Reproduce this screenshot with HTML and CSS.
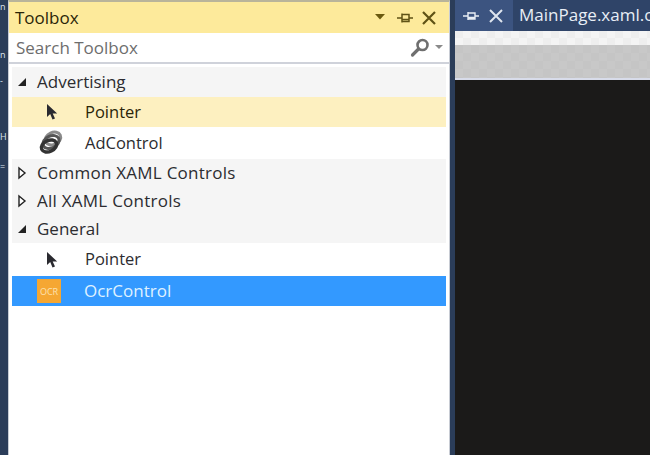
FILE: index.html
```html
<!DOCTYPE html>
<html lang="en">
<head>
<meta charset="utf-8">
<title>Toolbox</title>
<link rel="stylesheet" href="styles.css">
</head>
<body>
<div class="app">
  <div class="rail">
    <span class="r1">n</span><span class="r2">n</span><span class="r3">-</span><span class="r4">H</span><span class="r5">=</span>
  </div>
  <section class="toolbox">
    <header class="titlebar">
      <span class="title">Toolbox</span>
      <svg class="title-icons" width="66" height="16" viewBox="0 0 66 16">
        <path d="M1 4h10L6 9.500z" fill="#6b5a10"/>
        <path d="M23 8h5M28 3.500v9M28 4.500h7v7h-7M28 9.500h7M35 8h4" fill="none" stroke="#5f5215" stroke-width="1.500"/>
        <path d="M49 2l12 12M61 2L49 14" fill="none" stroke="#5f5215" stroke-width="2.200"/>
      </svg>
    </header>
    <div class="search">
      <span class="placeholder">Search Toolbox</span>
      <svg class="search-icon" width="38" height="20" viewBox="0 0 38 20">
        <circle cx="13.500" cy="7" r="5" fill="none" stroke="#6f6f6f" stroke-width="2.600"/>
        <path d="M9.500 11L3.500 17" stroke="#6f6f6f" stroke-width="3.200" stroke-linecap="round"/>
        <path d="M26 7h8l-4 4z" fill="#8a8a8a"/>
      </svg>
    </div>
    <div class="list">
      <div class="group g1"><svg class="tri" width="12" height="12" viewBox="0 0 12 12"><path d="M10 2v8H2z" fill="#222"/></svg><span class="label">Advertising</span></div>
      <div class="item hover h30">
        <svg class="ico" width="14" height="20" viewBox="0 0 14 20"><path d="M2 2v13l3.200-3 2.300 5.500 2.500-1-2.300-5h4.500z" fill="#2a2a30"/></svg>
        <span class="label narrow">Pointer</span>
      </div>
      <div class="item h32">
        <svg class="ico ad" width="26" height="26" viewBox="0 0 26 26">
          <ellipse cx="15" cy="8.500" rx="8" ry="6" transform="rotate(-25 15 8.500)" fill="none" stroke="#8a8a8a" stroke-width="3"/>
          <ellipse cx="13" cy="12" rx="8.500" ry="6" transform="rotate(-25 13 12)" fill="none" stroke="#555" stroke-width="3"/>
          <ellipse cx="11" cy="16" rx="8" ry="5.500" transform="rotate(-25 11 16)" fill="none" stroke="#333" stroke-width="3.500"/>
        </svg>
        <span class="label ad-label">AdControl</span>
      </div>
      <div class="group"><svg class="tri" width="12" height="14" viewBox="0 0 12 14"><path d="M3 2l6 5-6 5z" fill="#fff" stroke="#222" stroke-width="1.400"/></svg><span class="label wide">Common XAML Controls</span></div>
      <div class="group"><svg class="tri" width="12" height="14" viewBox="0 0 12 14"><path d="M3 2l6 5-6 5z" fill="#fff" stroke="#222" stroke-width="1.400"/></svg><span class="label wide">All XAML Controls</span></div>
      <div class="group"><svg class="tri" width="12" height="12" viewBox="0 0 12 12"><path d="M10 2v8H2z" fill="#222"/></svg><span class="label">General</span></div>
      <div class="item h33">
        <svg class="ico" width="14" height="20" viewBox="0 0 14 20"><path d="M2 2v13l3.200-3 2.300 5.500 2.500-1-2.300-5h4.500z" fill="#2a2a30"/></svg>
        <span class="label narrow">Pointer</span>
      </div>
      <div class="item selected h30">
        <span class="ocr">OCR</span>
        <span class="label">OcrControl</span>
      </div>
    </div>
  </section>
  <section class="doc">
    <div class="tabs">
      <div class="tab-tools">
        <svg width="52" height="18" viewBox="0 0 52 18">
          <path d="M3 9h5M8 5v8M8 6h7v6H8M8 10.500h7M15 9h4" fill="none" stroke="#e8edf4" stroke-width="1.400"/>
          <path d="M30 3l12 12M42 3L30 15" fill="none" stroke="#dfe5ee" stroke-width="2"/>
        </svg>
      </div>
      <div class="tab">MainPage.xaml.cs</div>
    </div>
    <div class="ruler"></div>
    <div class="band"></div>
    <div class="canvas"></div>
  </section>
</div>
</body>
</html>
```
FILE: styles.css
```css
* { box-sizing: border-box; }
html, body { margin: 0; padding: 0; }
body {
  width: 650px;
  height: 455px;
  overflow: hidden;
  font-family: "Open Sans", "Noto Sans", sans-serif;
  font-size: 17px;
  color: #2c2c30;
}
.app { display: flex; width: 650px; height: 455px; background: #2b3d59; }
.rail {
  width: 8px;
  flex: none;
  overflow: hidden;
  display: flex;
  flex-direction: column;
  align-items: flex-start;
  color: #dfe6ef;
  font-size: 9px;
  line-height: 10px;
}
.r1 { margin-top: 2px; }
.r2 { margin-top: 38px; }
.r3 { margin-top: 16px; }
.r4 { margin-top: 46px; }
.r5 { margin-top: 20px; }
.toolbox {
  width: 442px;
  flex: none;
  display: flex;
  flex-direction: column;
  background: #fff;
  border-top: 2px solid #b9b49a;
  border-left: 1px solid #c8ccd4;
  border-right: 1px solid #c8ccd4;
}
.titlebar {
  height: 31px;
  flex: none;
  display: flex;
  align-items: center;
  justify-content: space-between;
  padding: 0 9px 0 6px;
  background: #fdea9b;
}
.title { color: #2a2508; font-size: 17px; }
.search {
  height: 31px;
  flex: none;
  display: flex;
  align-items: center;
  justify-content: space-between;
  padding: 0 2px 0 7px;
  border-bottom: 2px solid #cfd2da;
}
.placeholder { color: #6d6d6d; font-size: 17px; }
.list { flex: 1; padding: 3px 3px 0 3px; }
.group {
  display: flex;
  align-items: center;
  height: 28px;
  background: #f5f5f5;
}
.g1 { height: 30px; }
.label { margin-bottom: 2px; }
.tri { width: 12px; margin-left: 4px; margin-right: 9px; flex: none; }
.wide { letter-spacing: 0.25px; }
.narrow { font-size: 16.500px; }
.ad-label { font-size: 16.500px; }
.item { display: flex; align-items: center; padding-left: 33px; }
.h30 { height: 30px; }
.h32 { height: 32px; }
.h33 { height: 33px; }
.hover { background: #fdf0c0; color: #2a2508; }
.ico { flex: none; width: 14px; margin-right: 26px; }
.ad { width: 26px; margin-left: -7px; margin-right: 21px; }
.selected { background: #3399ff; color: #dff1ff; padding-left: 25px; }
.ocr {
  width: 24px;
  height: 24px;
  flex: none;
  display: flex;
  align-items: center;
  justify-content: center;
  margin-right: 23px;
  background: #f5a733;
  color: #fde2b0;
  font-size: 9px;
}
.doc { flex: 1; display: flex; flex-direction: column; margin-left: 5px; min-width: 0; background: #1a1a1a; }
.tabs { height: 31px; flex: none; display: flex; background: #2f4468; }
.tab-tools { width: 58px; flex: none; display: flex; align-items: center; padding-left: 5px; background: #3c5480; }
.tab { padding-left: 6px; color: #e8eef6; font-size: 17px; line-height: 30px; white-space: nowrap; overflow: hidden; background: #2f4468; flex: 1; }
.ruler {
  height: 14px;
  flex: none;
  background: repeating-conic-gradient(#f4f4f4 0 25%, #eeeeee 0 50%) 0 0 / 16px 14px;
}
.band {
  height: 35px;
  flex: none;
  background: repeating-conic-gradient(#c8c8c8 0 25%, #c5c5c5 0 50%) 0 0 / 16px 16px;
  border-bottom: 2px solid #d8dcea;
}
.canvas { flex: 1; background: #1b1a19; }
```
